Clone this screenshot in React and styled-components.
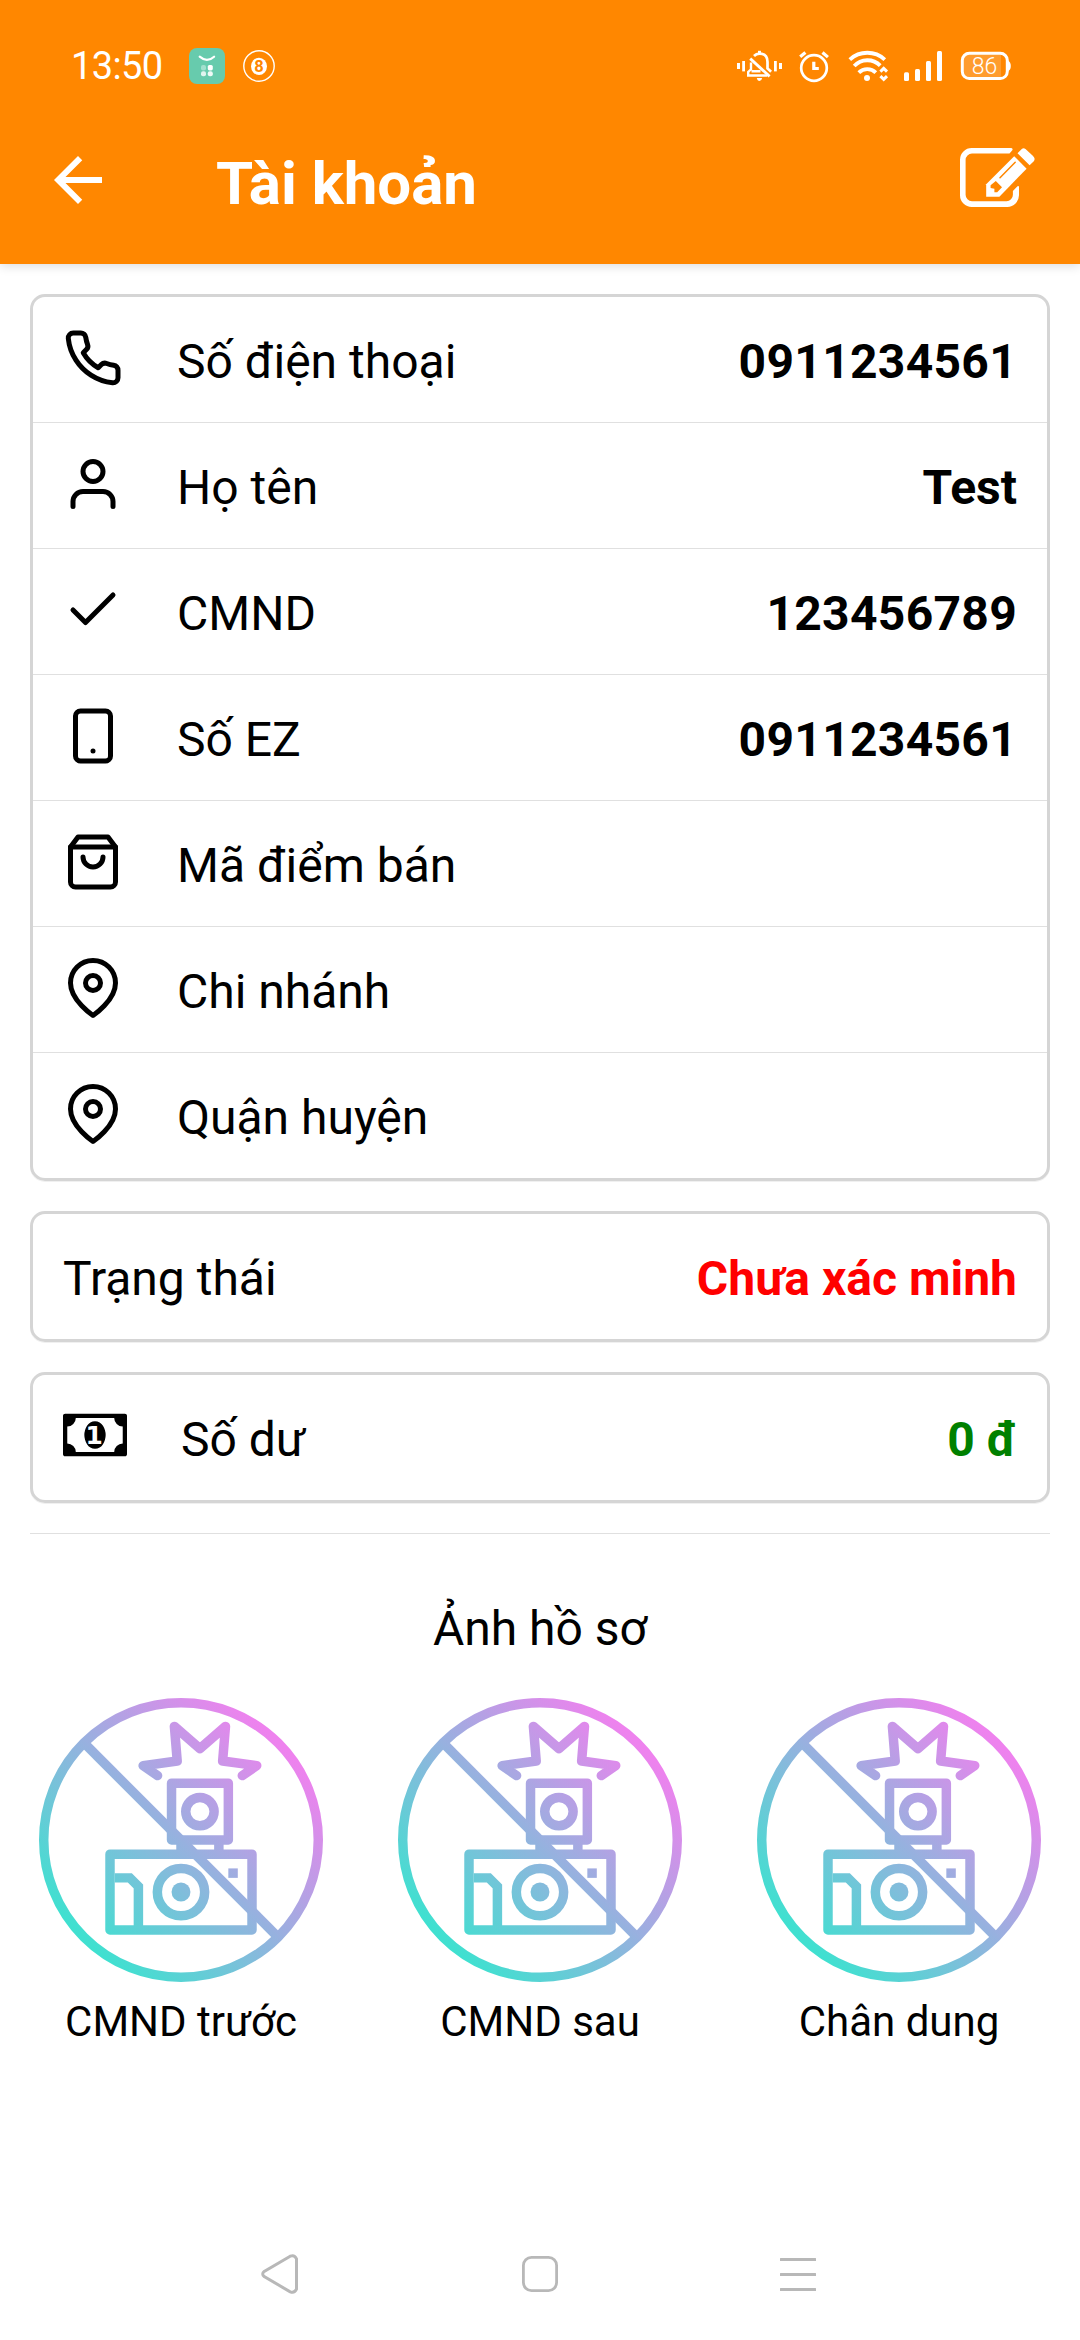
import React from 'react';
import styled, { createGlobalStyle } from 'styled-components';
import { FiPhone, FiUser, FiCheck, FiSmartphone, FiShoppingBag, FiMapPin } from 'react-icons/fi';
import { MdArrowBack } from 'react-icons/md';

const ORANGE = '#ff8700';

const GlobalStyle = createGlobalStyle`
  * {
    box-sizing: border-box;
  }

  body {
    margin: 0;
    background-color: #fff;
    font-family: Roboto, 'Noto Sans', sans-serif;
    color: #000;
  }

  svg {
    display: block;
    flex-shrink: 0;
    overflow: visible;
  }
`;

const Screen = styled.div`
  display: flex;
  flex-direction: column;
  width: 1080px;
  height: 2340px;
  overflow: hidden;
`;

const Header = styled.header`
  height: 264px;
  background-color: ${ORANGE};
  color: white;
  box-shadow: 0 2px 10px rgba(0, 0, 0, 0.14);
`;

const StatusBar = styled.div`
  display: flex;
  justify-content: space-between;
  align-items: center;
  height: 96px;
  padding: 36px 69px 0 71px;
`;

const StatusGroup = styled.div`
  display: flex;
  align-items: center;
  gap: ${props => props.$gap}px;
`;

const Clock = styled.span`
  width: 100px;
  font-size: 38px;
  line-height: 44px;
  letter-spacing: -0.6px;
  white-space: nowrap;
`;

const AppBar = styled.div`
  display: flex;
  align-items: center;
  height: 168px;
  padding: 0 45px 0 42px;
`;

const Title = styled.h1`
  flex: 1;
  margin: 0;
  padding: 7px 0 0 102px;
  font-size: 60px;
  line-height: 70px;
  font-weight: 700;
`;

const EditButton = styled.div`
  padding-bottom: 5px;
`;

const Content = styled.main`
  flex: 1;
  display: flex;
  flex-direction: column;
  gap: 30px;
  padding: 30px 30px 0;
`;

const Card = styled.section`
  border: 3px solid #d5d5d5;
  border-radius: 15px;
  box-shadow: 0 1px 0 #f0f0f0;
`;

const Row = styled.div`
  display: flex;
  align-items: center;
  height: 125px;
  padding: 0 30px;
  font-size: 48px;

  & + & {
    height: 126px;
    border-top: 1px solid #e0e0e0;
  }
`;

const RowIcon = styled.div`
  margin-right: 54px;
  padding-bottom: ${props => props.$lift || 3}px;
`;

const Label = styled.span`
  flex: 1;
  padding-top: 4px;
  line-height: 56px;
`;

const Value = styled.span`
  padding-top: 4px;
  line-height: 56px;
  font-weight: 700;
  letter-spacing: ${props => (props.$digits ? '0.3px' : 'normal')};
  color: ${props => props.$color || '#000'};
`;

const Divider = styled.hr`
  width: 100%;
  height: 1px;
  margin: 0;
  border: 0;
  background-color: #e0e0e0;
`;

const PhotoTitle = styled.h2`
  margin: 37px 0 0;
  font-size: 48px;
  line-height: 56px;
  font-weight: 400;
  text-align: center;
`;

const Photos = styled.div`
  display: grid;
  grid-template-columns: repeat(3, 359px);
  justify-content: center;
  margin: 11px -30px 0;
`;

const Photo = styled.figure`
  display: flex;
  flex-direction: column;
  align-items: center;
  margin: 0;
`;

const Caption = styled.figcaption`
  margin-top: 15px;
  font-size: 42px;
  line-height: 50px;
`;

const NavBar = styled.nav`
  display: flex;
  align-items: center;
  gap: 222px;
  height: 132px;
  padding-left: 260px;
`;

const CalendarAppIcon = () => (
  <svg width="36" height="36" viewBox="0 0 36 36">
    <rect width="36" height="36" rx="8" fill="#67cbad" />
    <path d="M10.7 8.7q7.3 6.4 14.4 0" fill="none" stroke="#fff" strokeWidth="2.2" strokeLinecap="round" />
    <g fill="#fff">
      <rect x="12" y="17" width="5" height="5.4" rx="2" opacity="0.4" />
      <rect x="18.8" y="17" width="5" height="5.4" rx="1.6" />
      <rect x="12" y="23.2" width="5" height="5" rx="2" opacity="0.8" />
      <rect x="18.8" y="23.2" width="5" height="5" rx="2" opacity="0.9" />
    </g>
  </svg>
);

const EightBallIcon = () => (
  <svg width="32" height="32" viewBox="0 0 32 32">
    <circle cx="16" cy="16" r="15.2" fill="none" stroke="#fff" strokeWidth="1.4" />
    <ellipse cx="16" cy="16.3" rx="8" ry="8.6" fill="#fff" />
    <text x="16" y="22" textAnchor="middle" fontFamily="Roboto, sans-serif" fontSize="16.5" fontWeight="700" fill={ORANGE}>
      8
    </text>
  </svg>
);

const SilentIcon = () => (
  <svg width="46" height="32" viewBox="0 0 46 32" fill="none" stroke="#fff">
    <g fill="#fff" stroke="none">
      <rect x="1" y="13" width="3" height="6" />
      <rect x="6.2" y="11" width="2.8" height="10.4" />
      <rect x="38" y="11" width="2.8" height="10.4" />
      <rect x="43" y="13" width="3" height="6" />
      <rect x="22" y="0.8" width="3" height="3" />
      <path d="M20.8 28h5.4q-.6 3-2.7 3t-2.7-3z" />
    </g>
    <path d="M18 6q2.300-2.400 5.500-2.400 8 0 8 8.400v6.400l3.600 3.400" strokeWidth="2.7" />
    <path d="M15 12.500v6.800l-2.800 2.600v3.600h19M15.500 21.300h9" strokeWidth="2.4" />
    <path d="M14.200 8.600l19.400 17.800" strokeWidth="2.8" />
  </svg>
);

const AlarmIcon = () => (
  <svg width="31" height="32" viewBox="0 0 31 32" fill="none" stroke="#fff">
    <circle cx="15" cy="18" r="12.8" strokeWidth="2.7" />
    <path d="M14.800 11.800v6.700h5" strokeWidth="3.2" />
    <path d="M1.200 6.800l5.200-4.300M23.500 2.500l5.400 4.600" strokeWidth="3.2" />
  </svg>
);

const WifiIcon = () => (
  <svg width="40" height="32" viewBox="0 0 40 32" fill="none" stroke="#fff" strokeWidth="3.8">
    <path d="M2.8 9.600a25.800 25.800 0 0 1 35 0" />
    <path d="M7.200 16a18 18 0 0 1 26-.4" />
    <path d="M11.800 22.600a12 12 0 0 1 17 0" />
    <circle cx="20" cy="28" r="3" fill="#fff" stroke="none" />
    <path d="M33.400 21.600l3.300-3.200 3.300 3.200M33.400 26.200l3.300 3.200 3.300-3.200" strokeWidth="3" />
  </svg>
);

const SignalIcon = () => (
  <svg width="39" height="32" viewBox="0 0 39 32" fill="#fff">
    <rect x="0" y="22.3" width="5" height="8.7" rx="1.5" />
    <rect x="11" y="19" width="5" height="12" rx="1.5" />
    <rect x="22" y="11" width="5" height="20" rx="1.5" />
    <rect x="33" y="1" width="5" height="30" rx="1.5" />
  </svg>
);

const BatteryIcon = () => (
  <svg width="51" height="32" viewBox="0 0 51 32">
    <path d="M4 4h37v24H4z" fill="#fff" opacity="0.18" />
    <rect x="2.3" y="3.3" width="45" height="25.2" rx="7" fill="none" stroke="#fff" strokeWidth="3" />
    <path d="M47.600 10.500q3.200 1.200 3.200 5.400t-3.200 5.400z" fill="#fff" />
    <text x="24.6" y="23.8" textAnchor="middle" fontFamily="Roboto, sans-serif" fontSize="23" fontWeight="300" fill="#fff">
      86
    </text>
  </svg>
);

const EditIcon = () => (
  <svg width="75" height="59" viewBox="0 0 75 59" fill="#fff">
    <path d="M11.7 0H51.3Q53.2.4 52.3 2.2L49.5 5.6H12A6.4 6.4 0 0 0 5.6 12V46.8A6.4 6.4 0 0 0 12 53.2H46.5A6.4 6.4 0 0 0 52.9 46.8V43L57.5 38.2Q59 37.4 59 39.2V47.3A11.7 11.7 0 0 1 47.3 59H11.7A11.7 11.7 0 0 1 0 47.3V11.7A11.7 11.7 0 0 1 11.7 0Z" />
    <path d="M57.5 5.3L61.8 1Q63.4-.6 65.5.9L72.8 7.8Q75.8 10.8 73.8 13.2L69.6 17.3Z" />
    <path d="M54.2 8.3L66.6 20.7 39.4 48.7H26.2V36.3Z" />
    <path d="M35.8 33L42 39.3 37.2 44.3H34.4V40.7L30.6 40V37.3Z" fill={ORANGE} />
    <path d="M55.2 14.3L40 29.7" stroke={ORANGE} strokeWidth="1.5" strokeLinecap="round" />
  </svg>
);

const MoneyIcon = () => (
  <svg width="64" height="60" viewBox="0 0 1920 1792">
    <path d="M1280 896q0 70-21 142t-59.5 134-101.5 101-138 39-138-39-101.5-101-59.5-134-21-142 21-142 59.5-134 101.5-101 138-39 138 39 101.5 101 59.5 134 21 142zm512 256v-512q-106 0-181-75t-75-181h-1152q0 106-75 181t-181 75v512q106 0 181 75t75 181h1152q0-106 75-181t181-75zm128-832v1152q0 26-19 45t-45 19h-1792q-26 0-45-19t-19-45v-1152q0-26 19-45t45-19h1792q26 0 45 19t19 45z" />
    <text x="938" y="1152" textAnchor="middle" fontFamily="'DejaVu Sans', sans-serif" fontSize="746" fontWeight="700" fill="#fff">
      1
    </text>
  </svg>
);

const NoPhotoIcon = ({ id }) => (
  <svg width="284" height="284" viewBox="0 0 60 60" fill="none" stroke={`url(#${id})`} strokeWidth="2" strokeLinejoin="round">
    <defs>
      <linearGradient id={id} gradientUnits="userSpaceOnUse" x1="9.5" y1="50.5" x2="50.5" y2="9.5">
        <stop offset="0" stopColor="#40e0d0" />
        <stop offset="1" stopColor="#ee82ee" />
      </linearGradient>
    </defs>
    <circle cx="30" cy="30" r="29" />
    <path d="M9.5 9.5l41 41" />
    {/* flash burst */}
    <path d="M25.05 16.4L22 14.3l7.2-1L28.6 6l5.4 4.7L39.4 6l-.6 7.3 7.2 1-3.05 2.1" strokeLinecap="round" />
    {/* flash unit */}
    <rect x="28" y="18" width="12" height="12" />
    <circle cx="34" cy="24" r="3" />
    <path d="M30 30v3M38 30v3" />
    {/* camera */}
    <rect x="15" y="33" width="30" height="16" />
    <path d="M16 38h3.2l1.8 1.8V49" strokeLinejoin="miter" />
    <circle cx="30" cy="41" r="5" />
    <circle cx="30" cy="41" r="2" fill={`url(#${id})`} stroke="none" />
    <rect x="40" y="36" width="2" height="2" fill={`url(#${id})`} stroke="none" />
  </svg>
);

const BackKey = () => (
  <svg width="40" height="42" viewBox="0 0 40 42" fill="none" stroke="#b8b8b8" strokeWidth="3">
    <path d="M30.2 3.2L4.2 18.4q-3 2.6 0 5.2l26 15.2q4.3 1.6 6.3-2.600V5.800q-2-4.200-6.300-2.600z" />
  </svg>
);

const HomeKey = () => (
  <svg width="36" height="36" viewBox="0 0 36 36">
    <rect x="1.4" y="1.4" width="33.2" height="33.2" rx="8" fill="none" stroke="#b8b8b8" strokeWidth="2.8" />
  </svg>
);

const MenuKey = () => (
  <svg width="36" height="36" viewBox="0 0 36 36" fill="#b8b8b8">
    <rect y="2" width="36" height="3" rx="0.5" />
    <rect y="17" width="36" height="3" rx="0.5" />
    <rect y="32" width="36" height="3" rx="0.5" />
  </svg>
);

const profile = [
  { icon: FiPhone, label: 'Số điện thoại', value: '0911234561', digits: true },
  { icon: FiUser, label: 'Họ tên', value: 'Test' },
  { icon: FiCheck, label: 'CMND', value: '123456789', digits: true },
  { icon: FiSmartphone, label: 'Số EZ', value: '0911234561', digits: true },
  { icon: FiShoppingBag, label: 'Mã điểm bán' },
  { icon: FiMapPin, label: 'Chi nhánh' },
  { icon: FiMapPin, label: 'Quận huyện' },
];

const photos = ['CMND trước', 'CMND sau', 'Chân dung'];

function App() {
  return (
    <Screen>
      <GlobalStyle />
      <Header>
        <StatusBar>
          <StatusGroup $gap={18}>
            <Clock>13:50</Clock>
            <CalendarAppIcon />
            <EightBallIcon />
          </StatusGroup>
          <StatusGroup $gap={17}>
            <SilentIcon />
            <AlarmIcon />
            <WifiIcon />
            <SignalIcon />
            <BatteryIcon />
          </StatusGroup>
        </StatusBar>
        <AppBar>
          <MdArrowBack size={72} />
          <Title>Tài khoản</Title>
          <EditButton>
            <EditIcon />
          </EditButton>
        </AppBar>
      </Header>

      <Content>
        <Card>
          {profile.map(({ icon: Icon, label, value, digits }) => (
            <Row key={label}>
              <RowIcon>
                <Icon size={60} />
              </RowIcon>
              <Label>{label}</Label>
              {value && <Value $digits={digits}>{value}</Value>}
            </Row>
          ))}
        </Card>
        <Card>
          <Row>
            <Label>Trạng thái</Label>
            <Value $color="#ff0000">Chưa xác minh</Value>
          </Row>
        </Card>
        <Card>
          <Row>
            <RowIcon $lift={5}>
              <MoneyIcon />
            </RowIcon>
            <Label>Số dư</Label>
            <Value $color="#008000">0 đ</Value>
          </Row>
        </Card>
        <Divider />
        <PhotoTitle>Ảnh hồ sơ</PhotoTitle>
        <Photos>
          {photos.map((name, i) => (
            <Photo key={name}>
              <NoPhotoIcon id={`photo-${i}`} />
              <Caption>{name}</Caption>
            </Photo>
          ))}
        </Photos>
      </Content>

      <NavBar>
        <BackKey />
        <HomeKey />
        <MenuKey />
      </NavBar>
    </Screen>
  );
}

export default App;
